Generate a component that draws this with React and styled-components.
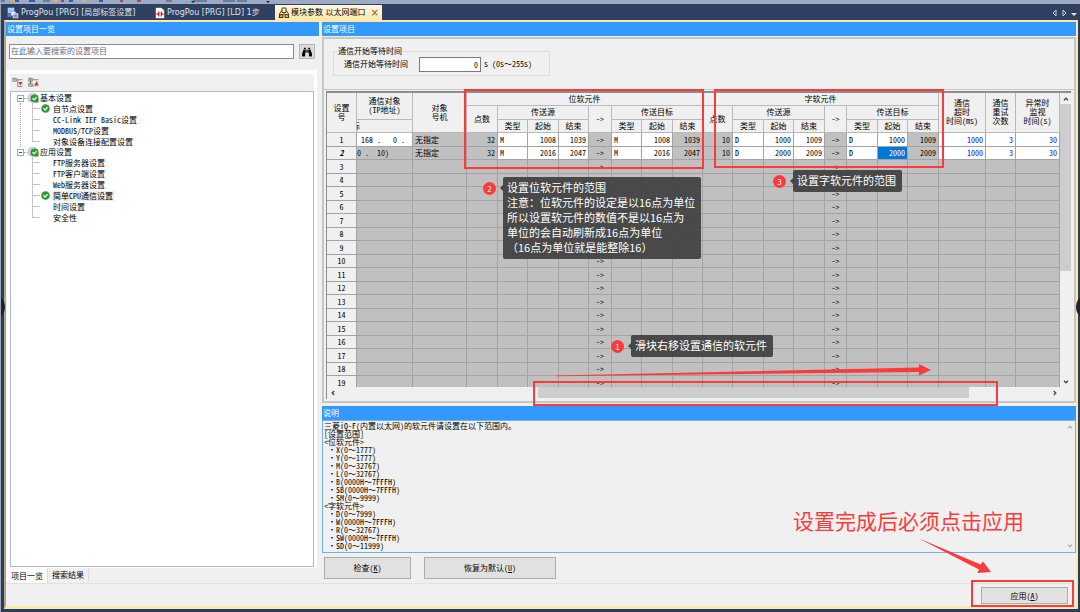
import React from 'react';
import styled, { createGlobalStyle, css } from 'styled-components';
import { FaBinoculars } from 'react-icons/fa';

const GlobalStyle = createGlobalStyle`
  * { box-sizing: border-box; }
  body {
    margin: 0;
    background: #2b3d5f;
    color: #000;
    font-family: "Noto Sans CJK SC", sans-serif;
    font-size: 8px;
    line-height: 10px;
    font-feature-settings: "hwid";
  }
  button, input { font: inherit; color: inherit; font-feature-settings: inherit; }
  button { padding: 0; }
  ul { list-style: none; margin: 0; padding: 0; }
`;

const tree = [
  {
    name: '基本设置',
    items: [
      { name: '自节点设置', checked: true },
      { name: 'CC-Link IEF Basic设置' },
      { name: 'MODBUS/TCP设置' },
      { name: '对象设备连接配置设置' },
    ],
  },
  {
    name: '应用设置',
    items: [
      { name: 'FTP服务器设置' },
      { name: 'FTP客户端设置' },
      { name: 'Web服务器设置' },
      { name: '简单CPU通信设置', checked: true, selected: true },
      { name: '时间设置' },
      { name: '安全性' },
    ],
  },
];

const columns = [30, 56, 54, 31, 30, 31, 30, 23, 30, 31, 30, 30, 31, 30, 31, 22, 31, 30, 31, 47, 30, 44];

const rows = [
  {
    ip: '168 .   0 .',
    ipOpen: true,
    bit: ['32', 'M', '1008', '1039', 'M', '1008', '1039'],
    word: ['10', 'D', '1000', '1009', 'D', '1000', '1009'],
  },
  {
    ip: '0 .  10)',
    current: true,
    bit: ['32', 'M', '2016', '2047', 'M', '2016', '2047'],
    word: ['10', 'D', '2000', '2009', 'D', '2000', '2009'],
  },
];

const emptyRows = Array.from({ length: 17 }, (_, i) => i + 3);

const description = `三菱iQ-F(内置以太网)的软元件请设置在以下范围内。
[设置范围]
<位软元件>
 ・X(0～1777)
 ・Y(0～1777)
 ・M(0～32767)
 ・L(0～32767)
 ・B(0000H～7FFFH)
 ・SB(0000H～7FFFH)
 ・SM(0～9999)
<字软元件>
 ・D(0～7999)
 ・W(0000H～7FFFH)
 ・R(0～32767)
 ・SW(0000H～7FFFH)
 ・SD(0～11999)`;

// keeps the range sign full width inside half-width text
const RangeText = ({ children }) => children.split('～').map((part, i) => (
  <React.Fragment key={i}>
    {i > 0 && <Wide>～</Wide>}
    {part}
  </React.Fragment>
));

const CheckIcon = () => (
  <svg width="9" height="9" viewBox="0 0 18 18">
    <circle cx="9" cy="9" r="8.5" fill="#2d9b32" />
    <path d="M5 8.5l3.2 3.5L13.2 6.5" fill="none" stroke="#fff" strokeWidth="2.4" />
  </svg>
);

const FolderCheckIcon = () => (
  <svg width="11" height="10" viewBox="0 0 22 20">
    <path d="M1 4h3V1h12v4h4v13H4v-2H1z" fill="#d4d4d4" stroke="#b4b4b4" />
    <circle cx="13" cy="11" r="8" fill="#2d9b32" />
    <path d="M9 10.5l3 3.3L17 8.5" fill="none" stroke="#fff" strokeWidth="2.4" />
    <path d="M15 19h6v-7z" fill="#2d9b32" />
  </svg>
);

const MinusBox = () => (
  <svg width="7" height="7" viewBox="0 0 7 7">
    <rect x="0.5" y="0.5" width="6" height="6" fill="#fff" stroke="#a3a9b5" />
    <path d="M2 3.5h3" stroke="#35508f" />
  </svg>
);

const LabelIcon = () => (
  <svg width="12" height="12" viewBox="0 0 24 24">
    <rect x="2" y="2" width="12" height="10" fill="#9fc4f5" stroke="#dbe7fa" />
    <rect x="1" y="13" width="8" height="7" fill="#4a7fd6" />
    <rect x="8" y="9" width="9" height="8" fill="#eef3fc" stroke="#6b8fd0" />
    <rect x="12" y="13" width="10" height="9" fill="#b9a5e8" stroke="#eee" />
    <path d="M14 17h6M14 20h6" stroke="#5d50a8" />
  </svg>
);

const LadderIcon = () => (
  <svg width="10" height="12" viewBox="0 0 20 24">
    <path d="M2 2h11l5 5v15H2z" fill="#fff" stroke="#ddd" />
    <path d="M13 2v5h5" fill="#d9d9d9" />
    <path d="M3 14h4M13 14h4M7.5 9v10M12.5 9v10" stroke="#e02020" strokeWidth="2.6" fill="none" />
  </svg>
);

const ModuleIcon = () => (
  <svg width="12" height="12" viewBox="0 0 24 24">
    <path d="M8 2h8v9H8z" fill="#fff3d8" stroke="#5a3c1c" strokeWidth="2" />
    <path d="M8 6l-5 8v6M16 6l5 8v6M12 11v5" fill="none" stroke="#5a3c1c" strokeWidth="2" />
    <path d="M2 21l3-6h5v6z" fill="#f3a040" stroke="#43301f" strokeWidth="2" />
    <path d="M22 21l-3-6h-5v6z" fill="#f3c080" stroke="#43301f" strokeWidth="2" />
  </svg>
);

const CollapseIcon = () => (
  <svg width="11" height="11" viewBox="0 0 22 22">
    <path d="M1.5 2.5h7v6h-7zM3 5.5h4M9 5.5h12M11.5 6v13h9" fill="none" stroke="#666" strokeWidth="1.5" />
    <path d="M13 10h8l-4 7z" fill="#e02a20" />
  </svg>
);

const ExpandIcon = () => (
  <svg width="11" height="11" viewBox="0 0 22 22">
    <path d="M1.5 2.5h7v6h-7zM1.5 12.5h7v6h-7zM3 5.5h4M5 3.5v4M3 15.5h4M5 8v5M9 5.5h12M9 17.5h12" fill="none" stroke="#666" strokeWidth="1.5" />
    <path d="M13 16l4-8l4 8z" fill="#e02a20" />
  </svg>
);

const turns = { up: 0, right: 90, down: 180, left: 270 };

const Chevron = ({ to, color = '#444' }) => (
  <svg width="8" height="8" viewBox="0 0 8 8">
    <path d="M2 5.2l2-2l2 2" fill="none" stroke={color} strokeWidth="1.3" transform={`rotate(${turns[to]} 4 4)`} />
  </svg>
);

const TabArrows = () => (
  <svg width="26" height="8" viewBox="0 0 26 8">
    <path d="M5 1L2 4l3 3zM12 1l3 3l-3 3z" fill="none" stroke="#c3cbdb" />
    <path d="M20 4h6l-3 3z" fill="#dde3ee" />
  </svg>
);

const ToolbarEdge = () => (
  <svg width="280" height="4" viewBox="0 0 280 4">
    <path d="M0 1h4M42 1h7M165 1h6M192 1h14M222 1h12M236 1h10" stroke="#6f7d98" strokeWidth="2" />
    <path d="M10 1h5M52 1h5M82 1h3" stroke="#e3b44a" strokeWidth="2" />
    <path d="M14 1h4M28 1h6M68 1h4M98 1h4" stroke="#3558b8" strokeWidth="2" />
    <path d="M60 1h3M119 1h3M136 1h4" stroke="#a04a62" strokeWidth="2" />
    <path d="M190 1h4l-2 2zM265 1h4l-2 2z" fill="#222" />
  </svg>
);

const GroupHeads = () => (
  <>
    <HeadCell rowSpan={2}>点数</HeadCell>
    <HeadCell colSpan={3}>传送源</HeadCell>
    <HeadCell rowSpan={2}>-&gt;</HeadCell>
    <HeadCell colSpan={3}>传送目标</HeadCell>
  </>
);

const GroupLeafHeads = () => (
  <>
    {['类型', '起始', '结束', '类型', '起始', '结束'].map((name, i) => (
      <HeadCell key={i}>{name}</HeadCell>
    ))}
  </>
);

const GroupCells = ({ values, active }) => {
  const [points, srcType, srcStart, srcEnd, dstType, dstStart, dstEnd] = values;
  return (
    <>
      <Cell $align="right">{points}</Cell>
      <Cell $open>{srcType}</Cell>
      <Cell $open $align="right">{srcStart}</Cell>
      <Cell $open $align="right">{srcEnd}</Cell>
      <Cell $align="center">-&gt;</Cell>
      <Cell $open>{dstType}</Cell>
      <Cell $open $align="right" $active={active}>{dstStart}</Cell>
      <Cell $align="right">{dstEnd}</Cell>
    </>
  );
};

const SettingsTable = () => (
  <Table>
    <colgroup>
      {columns.map((width, i) => <col key={i} style={{ width }} />)}
    </colgroup>
    <thead>
      <tr>
        <HeadCell rowSpan={3}>设置<br />号</HeadCell>
        <HeadCell rowSpan={2}>通信对象<br />(IP地址)</HeadCell>
        <HeadCell rowSpan={3}>对象<br />号机</HeadCell>
        <HeadCell colSpan={8}>位软元件</HeadCell>
        <HeadCell colSpan={8}>字软元件</HeadCell>
        <HeadCell rowSpan={3}>通信<br />超时<br />时间(ms)</HeadCell>
        <HeadCell rowSpan={3}>通信<br />重试<br />次数</HeadCell>
        <HeadCell rowSpan={3}>异常时<br />监视<br />时间(s)</HeadCell>
      </tr>
      <tr>
        <GroupHeads />
        <GroupHeads />
      </tr>
      <tr>
        <HeadCell $cut>标</HeadCell>
        <GroupLeafHeads />
        <GroupLeafHeads />
      </tr>
    </thead>
    <tbody>
      {rows.map((row, i) => (
        <tr key={i}>
          <RowHead $current={row.current}>{i + 1}</RowHead>
          <IpCell $open={row.ipOpen}>{row.ip}</IpCell>
          <Cell>无指定</Cell>
          <GroupCells values={row.bit} />
          <GroupCells values={row.word} active={row.current} />
          <Cell $open $blue $align="right">1000</Cell>
          <Cell $open $blue $align="right">3</Cell>
          <Cell $open $blue $align="right">30</Cell>
        </tr>
      ))}
      {emptyRows.map((no) => (
        <tr key={no}>
          <RowHead>{no}</RowHead>
          {columns.slice(1).map((_, i) => (
            <Cell key={i} $align="center">{i === 6 || i === 14 ? '->' : ''}</Cell>
          ))}
        </tr>
      ))}
    </tbody>
  </Table>
);

const SettingTree = () => (
  <TreeFrame>
    <TreeToolbar>
      <IconButton type="button" aria-label="全部折叠"><CollapseIcon /></IconButton>
      <IconButton type="button" aria-label="全部展开"><ExpandIcon /></IconButton>
    </TreeToolbar>
    <Tree>
      {tree.map((group, g) => (
        <li key={group.name}>
          <TreeRow $group><MinusBox /><Dash /><FolderCheckIcon /><TreeLabel>{group.name}</TreeLabel></TreeRow>
          <TreeItems $line={g < tree.length - 1}>
            {group.items.map((item, i) => (
              <TreeRow as="li" key={item.name}>
                <Branch $last={i === group.items.length - 1} />
                <Mark>{item.checked && <CheckIcon />}</Mark>
                <TreeLabel $selected={item.selected}>{item.name}</TreeLabel>
              </TreeRow>
            ))}
          </TreeItems>
        </li>
      ))}
    </Tree>
  </TreeFrame>
);

const Annotations = () => (
  <>
    <Outline $left={464} $top={89} $width={240} $height={80} />
    <Outline $left={714} $top={89} $width={230} $height={79} />
    <Outline $left={533} $top={381} $width={465} $height={25} />
    <Outline $left={971} $top={580} $width={103} $height={27} />
    <Arrows viewBox="0 0 1080 612">
      <path d="M556 375.5L919 367.5L919 364L931 370L919 375.5L919 372L556 376.2z" />
      <path d="M918 538L980.5 564.5L983 561.5L991 572L977.5 573L979 569.5z" />
    </Arrows>
    <Callout $left={483} $top={177}>
      <Badge>2</Badge>
      <Note>
        设置位软元件的范围<br />
        注意：位软元件的设定是以16点为单位<br />
        所以设置软元件的数值不是以16点为<br />
        单位的会自动刷新成16点为单位<br />
        （16点为单位就是能整除16）
      </Note>
    </Callout>
    <Callout $left={773} $top={170}>
      <Badge>3</Badge>
      <Note>设置字软元件的范围</Note>
    </Callout>
    <Callout $left={611} $top={335}>
      <Badge>1</Badge>
      <Note>滑块右移设置通信的软元件</Note>
    </Callout>
    <Reminder>设置完成后必须点击应用</Reminder>
  </>
);

export default function App() {
  return (
    <Page>
      <GlobalStyle />
      <TopStrip><ToolbarEdge /></TopStrip>
      <TabBar>
        <DocTab type="button" $width={148}><LabelIcon />ProgPou [PRG] [局部标签设置]</DocTab>
        <DocTab type="button" $width={120}><LadderIcon />ProgPou [PRG] [LD] 1步</DocTab>
        <DocTab type="button" $active><ModuleIcon />模块参数 以太网端口<Close>×</Close></DocTab>
        <TabNav><TabArrows /></TabNav>
      </TabBar>
      <Window>
        <Main>
          <Column>
            <Title>设置项目一览</Title>
            <Search>
              <SearchInput aria-label="搜索" placeholder="在此输入要搜索的设置项目" />
              <SearchButton type="button" aria-label="查找"><FaBinoculars size={10} /></SearchButton>
            </Search>
            <SettingTree />
            <BottomTabs>
              <BottomTab type="button" $active>项目一览</BottomTab>
              <BottomTab type="button">搜索结果</BottomTab>
            </BottomTabs>
          </Column>
          <Column>
            <Title>设置项目</Title>
            <Panel>
              <WaitSection>
                <WaitBox>
                  <legend>通信开始等待时间</legend>
                  <label htmlFor="wait">通信开始等待时间</label>
                  <WaitInput id="wait" defaultValue="0" />
                  <span><RangeText>s (0s～255s)</RangeText></span>
                </WaitBox>
              </WaitSection>
              <GridFrame>
                <GridBody>
                  <Viewport><SettingsTable /></Viewport>
                  <VScroll>
                    <ScrollButton type="button" aria-label="向上"><Chevron to="up" /></ScrollButton>
                    <Thumb $grow={168} />
                    <Space $grow={104} />
                    <ScrollButton type="button" aria-label="向下"><Chevron to="down" /></ScrollButton>
                  </VScroll>
                </GridBody>
                <HScroll>
                  <ScrollButton type="button" aria-label="向左"><Chevron to="left" /></ScrollButton>
                  <Space $grow={200} />
                  <Thumb $grow={430} />
                  <Space $grow={80} />
                  <ScrollButton type="button" aria-label="向右"><Chevron to="right" /></ScrollButton>
                </HScroll>
              </GridFrame>
            </Panel>
            <Title>说明</Title>
            <Description>
              <pre><RangeText>{description}</RangeText></pre>
              <DescScroll>
                <Chevron to="up" color="#b0b0b0" />
                <Chevron to="down" color="#b0b0b0" />
              </DescScroll>
            </Description>
            <Actions>
              <Button type="button" $width={87}>检查(<u>K</u>)</Button>
              <Button type="button" $width={132}>恢复为默认(<u>U</u>)</Button>
            </Actions>
          </Column>
        </Main>
        <Footer>
          <Button type="button" $width={87} $small>应用(<u>A</u>)</Button>
        </Footer>
      </Window>
      <SideButton type="button" aria-label="上一张" $side="left" />
      <SideButton type="button" aria-label="下一张" $side="right" />
      <Annotations />
    </Page>
  );
}

const Page = styled.div`
  position: relative;
  display: flex;
  flex-direction: column;
  height: 100vh;
  overflow: hidden;
  border-left: 1px solid #9aa7bd;
`;

const Wide = styled.span`
  font-feature-settings: normal;
`;

const TopStrip = styled.div`
  height: 4px;
  background: #9caac4;
  svg { display: block; }
`;

const TabBar = styled.div`
  display: flex;
  align-items: flex-end;
  height: 16px;
  padding-left: 6px;
  background: #2f4060;
`;

const DocTab = styled.button`
  display: flex;
  align-items: center;
  gap: 2px;
  height: 15px;
  width: ${({ $width }) => ($width ? `${$width}px` : 'auto')};
  border: none;
  background: none;
  color: #dfe5f0;
  font-family: "DejaVu Sans", "Noto Sans CJK SC", sans-serif;
  white-space: nowrap;

  ${({ $active }) => $active && css`
    gap: 1px;
    padding: 0 3px;
    color: #000;
    background: linear-gradient(#fff8e2, #ffe8a6);
  `}
`;

const Close = styled.span`
  padding-left: 4px;
  color: #75633d;
  font-size: 10px;
`;

const TabNav = styled.div`
  display: flex;
  align-items: center;
  height: 15px;
  margin-left: auto;
  padding-right: 3px;
`;

const Window = styled.div`
  display: flex;
  flex-direction: column;
  flex: 1;
  min-height: 0;
  margin: 0 2px 3px 3px;
  border: 2px solid #ffe8a6;
  border-left-color: #b3a583;
  border-bottom-width: 3px;
  background: #f0f0f0;
`;

const Main = styled.div`
  display: grid;
  grid-template-columns: minmax(0, 313fr) minmax(0, 754fr);
  gap: 3px;
  flex: 1;
  min-height: 0;
`;

const Column = styled.div`
  display: flex;
  flex-direction: column;
  min-height: 0;
`;

const Title = styled.div`
  flex: none;
  height: 14px;
  padding: 1px 1px;
  line-height: 12px;
  color: #fff;
  background: #3399ff;
`;

const Search = styled.div`
  display: flex;
  gap: 5px;
  padding: 8px 4px 11px 3px;
`;

const SearchInput = styled.input`
  flex: 1;
  min-width: 0;
  height: 15px;
  padding: 0 1px 2px;
  border: 1px solid #8a8a8a;
  background: #fff;
  &::placeholder { color: #6d6d6d; }
`;

const SearchButton = styled.button`
  display: flex;
  align-items: center;
  justify-content: center;
  width: 16px;
  height: 15px;
  border: 1px solid #b5b5b5;
  background: #dcdcdc;
`;

const TreeFrame = styled.div`
  display: flex;
  flex-direction: column;
  flex: 1;
  min-height: 0;
  margin: 0 2px 0 1px;
  padding: 4px 3px 1px;
  background: #fff;
`;

const TreeToolbar = styled.div`
  display: flex;
  align-items: center;
  gap: 5px;
  height: 17px;
  padding-left: 2px;
  background: #f0f0f0;
`;

const IconButton = styled.button`
  display: flex;
  border: none;
  background: none;
`;

const Tree = styled.ul`
  flex: 1;
  padding: 1px 0 0 6px !important;
  border: 1px solid #b4bac4;
`;

const TreeRow = styled.div`
  display: flex;
  align-items: center;
  height: ${({ $group }) => ($group ? 10 : 11)}px;
`;

const Dash = styled.span`
  width: 4px;
  border-top: 1px dotted #aaa;
`;

const TreeLabel = styled.span`
  padding: 0 1px;
  white-space: pre;
  background: ${({ $selected }) => ($selected ? '#ececec' : 'none')};
`;

const TreeItems = styled.ul`
  margin-left: 3px !important;
  padding-left: 11px !important;
  border-left: 1px dotted ${({ $line }) => ($line ? '#aaa' : 'transparent')};
`;

const Branch = styled.span`
  width: 8px;
  height: 11px;
  background:
    linear-gradient(#c4c4c4, #c4c4c4) 0 0 / 1px ${({ $last }) => ($last ? '50%' : '100%')} no-repeat,
    linear-gradient(#c4c4c4, #c4c4c4) 0 5px / 8px 1px no-repeat;
`;

const Mark = styled.span`
  display: flex;
  width: 12px;
  padding-left: 1px;
`;

const BottomTabs = styled.div`
  display: flex;
  height: 15px;
  padding-left: 1px;
`;

const BottomTab = styled.button`
  height: ${({ $active }) => ($active ? 15 : 13)}px;
  padding: 0 4px;
  border: none;
  border-right: 1px solid #dcdcdc;
  background: ${({ $active }) => ($active ? '#fff' : '#f0f0f0')};
`;

const Panel = styled.div`
  display: flex;
  flex-direction: column;
  flex: 1;
  min-height: 0;
  margin: 1px 0 3px;
  border: 2px solid #c6c6c6;
`;

const WaitSection = styled.div`
  height: 51px;
  padding: 6px 9px;
  border-bottom: 1px solid #c6c6c6;
`;

const WaitBox = styled.fieldset`
  display: flex;
  align-items: center;
  width: 217px;
  height: 31px;
  margin: 0;
  padding: 0 10px 4px;
  border: 1px solid #dcdcdc;
  legend { margin-left: -7px; padding: 0 1px; line-height: 12px; }
  span { white-space: pre; }
`;

const WaitInput = styled.input`
  width: 62px;
  height: 15px;
  margin: 0 3px 0 11px;
  padding: 0 2px;
  border: 1px solid #7a7a7a;
  background: #fff;
  text-align: right;
`;

const GridFrame = styled.div`
  display: flex;
  flex-direction: column;
  flex: 1;
  min-height: 0;
  margin: 1px 3px 2px 2px;
  border-top: 2px solid #8c8c8c;
  border-left: 1px solid #8c8c8c;
`;

const GridBody = styled.div`
  display: flex;
  flex: 1;
  min-height: 0;
`;

const Viewport = styled.div`
  flex: 1;
  min-width: 0;
  overflow: hidden;
`;

const Table = styled.table`
  width: 100%;
  table-layout: fixed;
  border-collapse: separate;
  border-spacing: 0;
  line-height: 9px;

  thead tr { height: 13px; }
  thead tr:nth-child(2) { height: 14px; }
  tbody tr { height: 14px; }
  tbody tr:nth-child(even) { height: 13px; }
`;

const cellBase = css`
  padding: 0 2px 1px;
  border-right: 1px solid #a3a3a3;
  border-bottom: 1px solid #a3a3a3;
  overflow: hidden;
  white-space: pre;
`;

const HeadCell = styled.th`
  ${cellBase}
  padding: 0 0 2px;
  border-color: #b8b8b8;
  background: #f0f0f0;
  font-weight: 400;
  ${({ $cut }) => $cut && css`
    text-align: left;
    text-indent: -5px;
  `}
`;

const RowHead = styled.th`
  ${cellBase}
  background: #f0f0f0;
  font-weight: ${({ $current }) => ($current ? 700 : 400)};
  font-style: ${({ $current }) => ($current ? 'italic' : 'normal')};
`;

const Cell = styled.td`
  ${cellBase}
  text-align: ${({ $align }) => $align || 'left'};
  background: ${({ $open, $active }) => ($active ? '#0078d7' : $open ? '#fff' : '#c0c0c0')};
  color: ${({ $blue, $active }) => ($active ? '#fff' : $blue ? '#0000ff' : '#000')};
`;

const IpCell = styled(Cell)`
  padding: 0 ${({ $open }) => ($open ? 4 : 0)}px 1px;
`;

const VScroll = styled.div`
  display: flex;
  flex-direction: column;
  width: 11px;
`;

const HScroll = styled.div`
  display: flex;
  height: 12px;
  margin-right: 11px;
`;

const ScrollButton = styled.button`
  display: flex;
  flex: none;
  align-items: center;
  justify-content: center;
  width: 11px;
  height: 11px;
  border: none;
  background: none;
`;

const Thumb = styled.div`
  flex: ${({ $grow }) => $grow} 1 0;
  margin-bottom: 1px;
  background: #cdcdcd;
`;

const Space = styled.div`
  flex: ${({ $grow }) => $grow} 1 0;
`;

const Description = styled.div`
  display: flex;
  justify-content: space-between;
  border: 1px solid #6eb1ec;
  pre {
    margin: 0;
    padding: 1px 0 2px 1px;
    font-family: inherit;
    line-height: 8px;
  }
`;

const DescScroll = styled.div`
  display: flex;
  flex-direction: column;
  justify-content: space-between;
  padding: 2px 1px;
`;

const Actions = styled.div`
  display: flex;
  gap: 13px;
  padding: 4px 2px;
`;

const Button = styled.button`
  width: ${({ $width }) => $width}px;
  height: ${({ $small }) => ($small ? 17 : 22)}px;
  border: 1px solid #adadad;
  background: #e1e1e1;
`;

const Footer = styled.div`
  display: flex;
  justify-content: flex-end;
  padding: 3px 8px 2px;
  border-top: 1px solid #e2e2e2;
`;

const SideButton = styled.button`
  position: absolute;
  top: calc(50% - 12px);
  ${({ $side }) => $side}: -22px;
  width: 26px;
  height: 26px;
  border: none;
  border-radius: 50%;
  background: #222;
`;

const Outline = styled.div`
  position: absolute;
  left: ${({ $left }) => $left - 1}px;
  top: ${({ $top }) => $top}px;
  width: ${({ $width }) => $width}px;
  height: ${({ $height }) => $height}px;
  border: 2px solid #fb3b3b;
`;

const Arrows = styled.svg`
  position: absolute;
  left: -1px;
  top: 0;
  width: 1080px;
  height: 612px;
  fill: #fb3b3b;
  pointer-events: none;
`;

const Callout = styled.div`
  position: absolute;
  left: ${({ $left }) => $left - 1}px;
  top: ${({ $top }) => $top}px;
  display: flex;
  align-items: flex-start;
  font-size: 11px;
  line-height: 15px;
  font-feature-settings: normal;
`;

const Badge = styled.span`
  width: 13px;
  height: 13px;
  margin: 5px 7px 0 0;
  border-radius: 50%;
  background: #fb3b3b;
  color: #fff;
  font-size: 8px;
  line-height: 13px;
  text-align: center;
`;

const Note = styled.div`
  position: relative;
  padding: 3px 6px 4px 4px;
  border-radius: 2px;
  background: rgba(64, 64, 64, 0.93);
  color: #fff;
  white-space: nowrap;

  &::before {
    content: "";
    position: absolute;
    left: -3px;
    top: 8px;
    border: 3px solid transparent;
    border-left: none;
    border-right-color: #444;
  }
`;

const Reminder = styled.div`
  position: absolute;
  right: 56px;
  top: 505px;
  color: #fb3b3b;
  font-size: 21px;
  line-height: 30px;
`;
